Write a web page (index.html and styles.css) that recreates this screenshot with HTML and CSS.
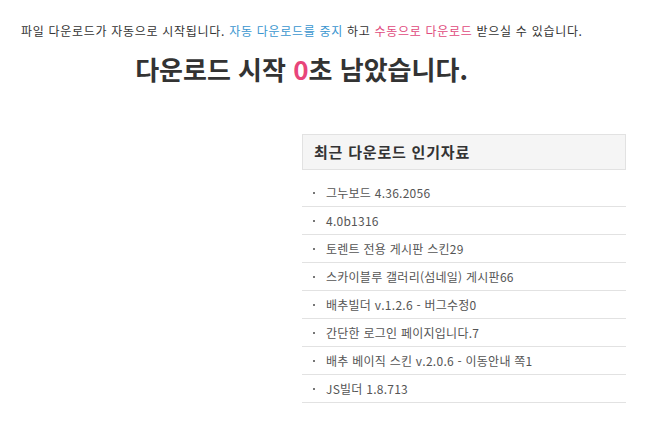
FILE: index.html
```html
<!DOCTYPE html>
<html lang="ko">
<head>
<meta charset="utf-8">
<title>다운로드</title>
<link rel="stylesheet" href="styles.css">
</head>
<body>
<div class="page">
  <p class="notice">파일 다운로드가 자동으로 시작됩니다. <a class="stop" href="#">자동 다운로드를 중지</a> 하고 <a class="manual" href="#">수동으로 다운로드</a> 받으실 수 있습니다.</p>
  <h1 class="countdown">다운로드 시작 <span class="sec">0</span>초 남았습니다.</h1>
  <div class="popular">
    <h2 class="popular-title">최근 다운로드 인기자료</h2>
    <ul class="popular-list">
      <li>그누보드 4.36.2056</li>
      <li>4.0b1316</li>
      <li>토렌트 전용 게시판 스킨29</li>
      <li>스카이블루 갤러리(섬네일) 게시판66</li>
      <li>배추빌더 v.1.2.6 - 버그수정0</li>
      <li>간단한 로그인 페이지입니다.7</li>
      <li>배추 베이직 스킨 v.2.0.6 - 이동안내 쪽1</li>
      <li>JS빌더 1.8.713</li>
    </ul>
  </div>
</div>
</body>
</html>
```
FILE: styles.css
```css
html, body {
  margin: 0;
  padding: 0;
  background: #fff;
}
body {
  font-family: "Noto Sans CJK KR", "Noto Sans", sans-serif;
  color: #333;
}
.page {
  width: 650px;
  display: flex;
  flex-direction: column;
}
.notice {
  margin: 23px 0 0 21px;
  font-size: 12px;
  letter-spacing: 0.7px;
  line-height: 16px;
  color: #333;
}
.notice a {
  text-decoration: none;
}
.stop { color: #3a96cf; }
.manual { color: #e04a7c; }
.countdown {
  margin: 14px 0 0 0;
  padding-right: 47px;
  text-align: center;
  font-size: 26px;
  line-height: 32px;
  font-weight: bold;
  color: #333;
}
.sec { color: #e8457a; }
.popular {
  margin: 49px 0 0 302px;
  width: 324px;
}
.popular-title {
  margin: 0;
  height: 34px;
  padding-left: 11px;
  border: 1px solid #e2e2e2;
  background: #f5f5f5;
  font-size: 15px;
  letter-spacing: 0.8px;
  line-height: 34px;
  font-weight: bold;
  color: #333;
}
.popular-list {
  list-style: none;
  margin: 9px 0 0 0;
  padding: 0;
}
.popular-list li {
  height: 27px;
  border-bottom: 1px solid #e2e2e2;
  padding-left: 24px;
  position: relative;
  font-size: 12px;
  letter-spacing: 0.25px;
  line-height: 27px;
  color: #555;
}
.popular-list li::before {
  content: "";
  position: absolute;
  left: 11px;
  top: 13px;
  width: 2px;
  height: 2px;
  background: #777;
}
```
